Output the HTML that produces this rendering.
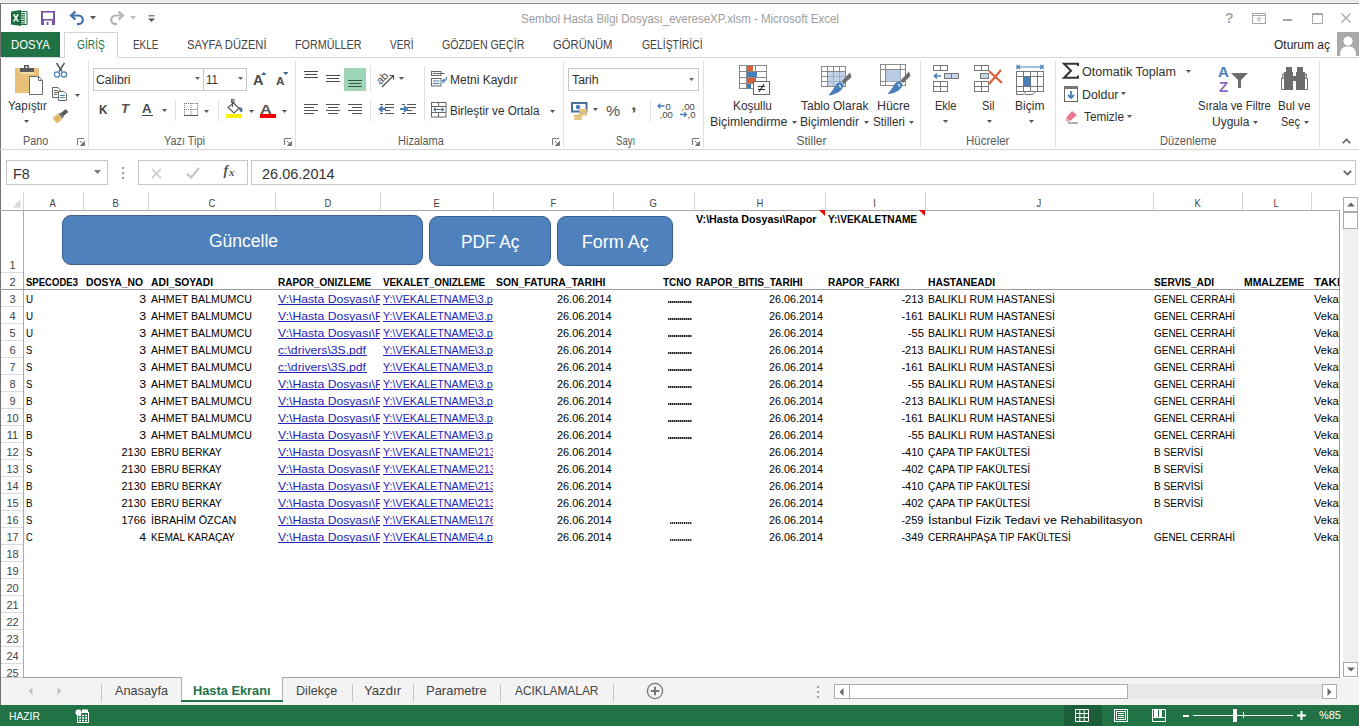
<!DOCTYPE html>
<html><head><meta charset="utf-8">
<style>
*{margin:0;padding:0;box-sizing:border-box}
html,body{width:1359px;height:726px;overflow:hidden;background:#fff;font-family:"Liberation Sans",sans-serif;position:relative}
.a{position:absolute}
.t{position:absolute;white-space:nowrap;line-height:1}
svg.a{overflow:visible}

</style></head><body>
<div class="a" style="left:0px;top:0px;width:1359px;height:2px;background:#ebebee;"></div>
<div class="a" style="left:0px;top:2px;width:1359px;height:1px;background:#f4f4f4;"></div>
<div class="a" style="left:0px;top:3px;width:1359px;height:1px;background:#858585;"></div>
<div class="a" style="left:0px;top:3px;width:1px;height:723px;background:#737373;"></div>
<div class="t" style="top:13px;font-size:12.5px;color:#9d9d9d;left:520.54px;transform:scaleX(0.9195);transform-origin:0 0;">Sembol Hasta Bilgi Dosyası_evereseXP.xlsm - Microsoft Excel</div>
<div class="t" style="top:11px;font-size:14px;color:#a9a9a9;font-weight:bold;left:1225.22px;transform:scaleX(1.0077);transform-origin:50% 0;">?</div>
<svg class="a" style="left:1252px;top:13px;" width="14" height="11" viewBox="0 0 14 11"><rect x="0.5" y="0.5" width="13" height="10" fill="none" stroke="#a6a6a6"/><path d="M1 2.5h12" stroke="#a6a6a6"/><path d="M7 9V4.5M4.8 6.5L7 4.3 9.2 6.5" fill="none" stroke="#a6a6a6"/></svg>
<div class="a" style="left:1283px;top:19px;width:9px;height:2px;background:#a6a6a6;"></div>
<svg class="a" style="left:1312px;top:13px;" width="11" height="11" viewBox="0 0 11 11"><rect x="0.5" y="0.5" width="10" height="10" fill="none" stroke="#a6a6a6"/><rect x="0" y="0" width="11" height="2" fill="#a6a6a6"/></svg>
<svg class="a" style="left:1341px;top:13px;" width="10" height="10" viewBox="0 0 10 10"><path d="M0.5 0.5L9.5 9.5M9.5 0.5L0.5 9.5" stroke="#a6a6a6" stroke-width="1.3"/></svg>
<div class="t" style="top:38.5px;font-size:12.5px;color:#262626;left:1273.52px;transform:scaleX(0.9589);transform-origin:0 0;">Oturum aç</div>
<div class="a" style="left:1337px;top:32px;width:22px;height:24px;background:#a9a9a9;"></div>
<svg class="a" style="left:1337px;top:32px;" width="22" height="24" viewBox="0 0 22 24"><circle cx="11" cy="9" r="4.6" fill="#fff"/><path d="M3 24 C3 16 6 14.5 11 14.5 C16 14.5 19 16 19 24Z" fill="#fff"/></svg>
<svg class="a" style="left:11px;top:10px;" width="17" height="16" viewBox="0 0 17 16"><rect x="9.5" y="1.5" width="6.5" height="13" rx="0.8" fill="#fff" stroke="#1e6b41" stroke-width="1.1"/><path d="M10 3.6h4.2M10 5.9h4.2M10 8.2h4.2M10 10.5h4.2M10 12.8h4.2" stroke="#1e6b41" stroke-width="1.3"/><path d="M0 1.5 L10 0 V16 L0 14.5Z" fill="#1e6b41"/><path d="M2.6 4.3 L7.2 11.6 M7.2 4.3 L2.6 11.6" stroke="#e8f5ec" stroke-width="1.7"/></svg>
<svg class="a" style="left:41px;top:11px;" width="14" height="14" viewBox="0 0 14 14"><path d="M0 0H14V14H0Z" fill="#7a58a8"/><rect x="2" y="1.6" width="10" height="6.4" fill="#fff"/><rect x="3" y="9.6" width="8" height="4.4" fill="#fff"/><rect x="5.6" y="10.8" width="1.8" height="3.2" fill="#7a58a8"/></svg>
<svg class="a" style="left:69px;top:10px;" width="16" height="15" viewBox="0 0 16 15"><path d="M6.5 1.5L2 5.5L6.5 9.5" fill="none" stroke="#3f6fae" stroke-width="2.2"/><path d="M2.5 5.5H9.5A4.3 4.3 0 0 1 9.5 14.1H8" fill="none" stroke="#3f6fae" stroke-width="2.2"/></svg>
<svg class="a" style="left:90px;top:16px;" width="6" height="4" viewBox="0 0 6 4"><path d="M0 0H6L3 3.5Z" fill="#555"/></svg>
<svg class="a" style="left:109px;top:10px;" width="16" height="15" viewBox="0 0 16 15"><path d="M9.5 1.5L14 5.5L9.5 9.5" fill="none" stroke="#b3b3b3" stroke-width="2.2"/><path d="M13.5 5.5H6.5A4.3 4.3 0 0 0 6.5 14.1H8" fill="none" stroke="#b3b3b3" stroke-width="2.2"/></svg>
<svg class="a" style="left:130px;top:16px;" width="6" height="4" viewBox="0 0 6 4"><path d="M0 0H6L3 3.5Z" fill="#bbb"/></svg>
<svg class="a" style="left:148px;top:15px;" width="7" height="8" viewBox="0 0 7 8"><rect x="0.5" y="0.3" width="6" height="1.1" fill="#555"/><path d="M0 3.5H7L3.5 7Z" fill="#555"/></svg>
<div class="a" style="left:1px;top:32px;width:59px;height:25px;background:#217346;"></div>
<div class="t" style="top:39px;font-size:12.5px;color:#fff;left:10.55px;transform:scaleX(0.9081);transform-origin:0 0;">DOSYA</div>
<div class="a" style="left:64px;top:32px;width:54px;height:26px;background:#fff;border:1px solid #d5d5d5;border-bottom:none;"></div>
<div class="a" style="left:0px;top:57px;width:64px;height:1px;background:#d5d5d5;"></div>
<div class="a" style="left:118px;top:57px;width:1241px;height:1px;background:#d5d5d5;"></div>
<div class="t" style="top:39px;font-size:12.5px;color:#217346;left:76.59px;transform:scaleX(0.8170);transform-origin:0 0;">GİRİŞ</div>
<div class="t" style="top:39px;font-size:12.5px;color:#444;left:132.60px;transform:scaleX(0.7943);transform-origin:0 0;">EKLE</div>
<div class="t" style="top:39px;font-size:12.5px;color:#444;left:186.55px;transform:scaleX(0.8975);transform-origin:0 0;">SAYFA DÜZENİ</div>
<div class="t" style="top:39px;font-size:12.5px;color:#444;left:294.57px;transform:scaleX(0.8621);transform-origin:0 0;">FORMÜLLER</div>
<div class="t" style="top:39px;font-size:12.5px;color:#444;left:389.90px;transform:scaleX(0.8053);transform-origin:0 0;">VERİ</div>
<div class="t" style="top:39px;font-size:12.5px;color:#444;left:441.57px;transform:scaleX(0.8530);transform-origin:0 0;">GÖZDEN GEÇİR</div>
<div class="t" style="top:39px;font-size:12.5px;color:#444;left:552.95px;transform:scaleX(0.9020);transform-origin:0 0;">GÖRÜNÜM</div>
<div class="t" style="top:39px;font-size:12.5px;color:#444;left:641.58px;transform:scaleX(0.8313);transform-origin:0 0;">GELİŞTİRİCİ</div>
<div class="a" style="left:0px;top:149px;width:1359px;height:1px;background:#d5d5d5;"></div>
<div class="a" style="left:88px;top:61px;width:1px;height:86px;background:#e1e1e1;"></div>
<div class="a" style="left:295px;top:61px;width:1px;height:86px;background:#e1e1e1;"></div>
<div class="a" style="left:563px;top:61px;width:1px;height:86px;background:#e1e1e1;"></div>
<div class="a" style="left:703px;top:61px;width:1px;height:86px;background:#e1e1e1;"></div>
<div class="a" style="left:920px;top:61px;width:1px;height:86px;background:#e1e1e1;"></div>
<div class="a" style="left:1055px;top:61px;width:1px;height:86px;background:#e1e1e1;"></div>
<div class="a" style="left:1319px;top:61px;width:1px;height:86px;background:#e1e1e1;"></div>
<div class="t" style="top:135px;font-size:12px;color:#5a5a5a;left:23.17px;transform:scaleX(0.9013);transform-origin:0 0;">Pano</div>
<div class="t" style="top:135px;font-size:12px;color:#5a5a5a;left:163.57px;transform:scaleX(0.9054);transform-origin:0 0;">Yazı Tipi</div>
<div class="t" style="top:135px;font-size:12px;color:#5a5a5a;left:397.56px;transform:scaleX(0.9173);transform-origin:0 0;">Hizalama</div>
<div class="t" style="top:135px;font-size:12px;color:#5a5a5a;left:615.61px;transform:scaleX(0.8024);transform-origin:0 0;">Sayı</div>
<div class="t" style="top:135px;font-size:12px;color:#5a5a5a;left:796.52px;">Stiller</div>
<div class="t" style="top:135px;font-size:12px;color:#5a5a5a;left:966.04px;transform:scaleX(0.9572);transform-origin:0 0;">Hücreler</div>
<div class="t" style="top:135px;font-size:12px;color:#5a5a5a;left:1159.55px;transform:scaleX(0.9290);transform-origin:0 0;">Düzenleme</div>
<svg class="a" style="left:77px;top:138px;" width="8" height="8" viewBox="0 0 8 8"><path d="M0.5 7V0.5H7" fill="none" stroke="#777"/><path d="M3 3L7 7M7.5 3.5V7.5H3.5Z" stroke="#777" fill="#777"/></svg>
<svg class="a" style="left:284px;top:138px;" width="8" height="8" viewBox="0 0 8 8"><path d="M0.5 7V0.5H7" fill="none" stroke="#777"/><path d="M3 3L7 7M7.5 3.5V7.5H3.5Z" stroke="#777" fill="#777"/></svg>
<svg class="a" style="left:552px;top:138px;" width="8" height="8" viewBox="0 0 8 8"><path d="M0.5 7V0.5H7" fill="none" stroke="#777"/><path d="M3 3L7 7M7.5 3.5V7.5H3.5Z" stroke="#777" fill="#777"/></svg>
<svg class="a" style="left:692px;top:138px;" width="8" height="8" viewBox="0 0 8 8"><path d="M0.5 7V0.5H7" fill="none" stroke="#777"/><path d="M3 3L7 7M7.5 3.5V7.5H3.5Z" stroke="#777" fill="#777"/></svg>
<svg class="a" style="left:1342px;top:138px;" width="9" height="6" viewBox="0 0 9 6"><path d="M0.8 5.2L4.5 1.3L8.2 5.2" fill="none" stroke="#555" stroke-width="1.6"/></svg>
<div class="t" style="top:100px;font-size:12px;color:#303030;left:7.54px;transform:scaleX(0.9618);transform-origin:0 0;">Yapıştır</div>
<svg class="a" style="left:24px;top:120px;" width="5" height="3" viewBox="0 0 5 3"><path d="M0 0H5L2.5 3Z" fill="#555"/></svg>
<svg class="a" style="left:14px;top:64px;" width="31" height="32" viewBox="0 0 31 32"><rect x="1" y="4" width="24" height="25" fill="#e8c07a"/><rect x="6" y="8" width="14" height="2" fill="#f3dcae"/>
<rect x="6" y="4" width="14" height="4" fill="#595959"/><rect x="10" y="1" width="5" height="4" fill="#595959"/><rect x="11.5" y="2.3" width="2" height="1.6" fill="#fff"/>
<path d="M15.5 12.5H24.5L28.5 16.5V30.5H15.5Z" fill="#fff" stroke="#6d6d6d"/><path d="M24.5 12.5V16.5H28.5" fill="none" stroke="#6d6d6d"/></svg>
<svg class="a" style="left:53px;top:63px;" width="15" height="15" viewBox="0 0 15 15"><path d="M3.5 0L9 8.5M11.5 0L6 8.5" stroke="#555" stroke-width="1.4"/><circle cx="4" cy="11.5" r="2.6" fill="none" stroke="#4a7ebb" stroke-width="1.3"/><circle cx="11" cy="11.5" r="2.6" fill="none" stroke="#4a7ebb" stroke-width="1.3"/></svg>
<svg class="a" style="left:52px;top:87px;" width="15" height="14" viewBox="0 0 15 14"><path d="M0.5 0.5H6L8 2.5V10.5H0.5Z" fill="#fff" stroke="#666"/><path d="M2 3.5h4M2 5.5h4M2 7.5h3" stroke="#666"/><path d="M6.5 4.5H12L14.5 7V13.5H6.5Z" fill="#fff" stroke="#666"/><path d="M8 8.5h5M8 10.5h5" stroke="#4a7ebb"/></svg>
<svg class="a" style="left:75px;top:94px;" width="5" height="3" viewBox="0 0 5 3"><path d="M0 0H5L2.5 3Z" fill="#555"/></svg>
<svg class="a" style="left:52px;top:108px;" width="17" height="16" viewBox="0 0 17 16"><g transform="rotate(-40 8.5 8)"><rect x="10" y="6" width="7" height="4" fill="#595959"/><rect x="8" y="5" width="2.5" height="6" fill="#777"/><path d="M1 4.5H8V11.5H1Z" fill="#e6bd6e"/><path d="M3.5 4.5V11.5M5.5 4.5V11.5" stroke="#d6a850" stroke-width="0.6"/></g></svg>
<div class="a" style="left:93px;top:68px;width:154px;height:23px;background:#fff;border:1px solid #c6c6c6;"></div>
<div class="a" style="left:203px;top:69px;width:1px;height:21px;background:#c6c6c6;"></div>
<div class="t" style="top:74px;font-size:12px;color:#303030;left:96.01px;transform:scaleX(1.0134);transform-origin:0 0;">Calibri</div>
<div class="t" style="top:74px;font-size:12px;color:#303030;left:206.04px;transform:scaleX(0.9558);transform-origin:0 0;">11</div>
<svg class="a" style="left:195px;top:77px;" width="5" height="3" viewBox="0 0 5 3"><path d="M0 0H5L2.5 3Z" fill="#666"/></svg>
<svg class="a" style="left:238px;top:77px;" width="5" height="3" viewBox="0 0 5 3"><path d="M0 0H5L2.5 3Z" fill="#666"/></svg>
<div class="t" style="top:73px;font-size:14px;color:#4a4a4a;font-weight:bold;left:252.62px;transform:scaleX(1.0328);transform-origin:0 0;">A</div>
<svg class="a" style="left:260.8px;top:72px;" width="6" height="3" viewBox="0 0 6 3"><path d="M0 3H5.5L2.75 0Z" fill="#44618a"/></svg>
<div class="t" style="top:76px;font-size:11px;color:#4a4a4a;font-weight:bold;left:275.53px;transform:scaleX(1.0604);transform-origin:0 0;">A</div>
<svg class="a" style="left:283px;top:72px;" width="6" height="3" viewBox="0 0 6 3"><path d="M0 0H5.5L2.75 3Z" fill="#44618a"/></svg>
<div class="t" style="top:104px;font-size:12px;color:#444;font-weight:bold;left:99.23px;transform:scaleX(0.9725);transform-origin:0 0;">K</div>
<div class="t" style="top:103px;font-size:12.5px;color:#555;font-weight:bold;font-style:italic;left:121.47px;transform:scaleX(1.0541);transform-origin:0 0;">T</div>
<div class="t" style="top:103px;font-size:12.5px;color:#4a4a4a;font-weight:bold;left:142.47px;transform:scaleX(1.0584);transform-origin:0 0;">A</div>
<div class="a" style="left:142px;top:115px;width:11px;height:1px;background:#444;"></div>
<svg class="a" style="left:162px;top:109px;" width="5" height="3" viewBox="0 0 5 3"><path d="M0 0H5L2.5 3Z" fill="#555"/></svg>
<div class="a" style="left:175px;top:100px;width:1px;height:21px;background:#e1e1e1;"></div>
<svg class="a" style="left:184px;top:103px;" width="14" height="13" viewBox="0 0 14 13"><path d="M0.5 0V12M13.5 0V12M7 0V12M0 0.5H14M0 6.5H14" fill="none" stroke="#666" stroke-dasharray="1 1.1"/><path d="M0 12.5H14" stroke="#555"/></svg>
<svg class="a" style="left:204px;top:110px;" width="5" height="3" viewBox="0 0 5 3"><path d="M0 0H5L2.5 3Z" fill="#555"/></svg>
<div class="a" style="left:218px;top:100px;width:1px;height:21px;background:#e1e1e1;"></div>
<svg class="a" style="left:226px;top:99px;" width="18" height="15" viewBox="0 0 18 15"><path d="M7.5 4L13 9.5L8 14L2 8.5Z" fill="#fff" stroke="#555" stroke-width="1.1"/><path d="M6.5 1.5V8" stroke="#555" stroke-width="1.1"/><rect x="5.5" y="0.5" width="2.5" height="3" fill="none" stroke="#555" stroke-width="0.9"/><path d="M12 8.5Q16.5 7.5 16.5 11Q16.5 13 15 13.5Q13.5 11 12 8.5Z" fill="#4a6f9c"/></svg>
<div class="a" style="left:226px;top:114px;width:16px;height:4px;background:#f7f10a;"></div>
<svg class="a" style="left:249px;top:110px;" width="5" height="3" viewBox="0 0 5 3"><path d="M0 0H5L2.5 3Z" fill="#555"/></svg>
<div class="t" style="top:103px;font-size:13px;color:#555;font-weight:bold;left:260.35px;transform:scaleX(1.2574);transform-origin:0 0;">A</div>
<div class="a" style="left:260px;top:114px;width:16px;height:4px;background:#f00000;"></div>
<svg class="a" style="left:282px;top:110px;" width="5" height="3" viewBox="0 0 5 3"><path d="M0 0H5L2.5 3Z" fill="#555"/></svg>
<svg class="a" style="left:304px;top:71px;" width="15" height="8" viewBox="0 0 15 8"><path d="M0 0.5H14M1 3.5H13M0 6.5H14" stroke="#4a4a4a"/></svg>
<svg class="a" style="left:326px;top:75px;" width="15" height="8" viewBox="0 0 15 8"><path d="M0 0.5H14M1 3.5H13M0 6.5H14" stroke="#4a4a4a"/></svg>
<div class="a" style="left:344px;top:68px;width:22px;height:23px;background:#9fd5b7;"></div>
<svg class="a" style="left:348px;top:80px;" width="15" height="8" viewBox="0 0 15 8"><path d="M0 0.5H14M1 3.5H13M0 6.5H14" stroke="#2f5a3f"/></svg>
<div class="a" style="left:370px;top:66px;width:1px;height:25px;background:#e1e1e1;"></div>
<svg class="a" style="left:377px;top:70px;" width="19" height="18" viewBox="0 0 19 18"><text x="0" y="0" font-size="11" font-family="Liberation Sans" fill="#4a4a4a" transform="translate(3.5 15) rotate(-45)">ab</text><path d="M5 17L16 6M12.5 5.5H16.5V9.5" fill="none" stroke="#4a4a4a" stroke-width="1.2"/></svg>
<svg class="a" style="left:399px;top:77px;" width="5" height="3" viewBox="0 0 5 3"><path d="M0 0H5L2.5 3Z" fill="#555"/></svg>
<div class="a" style="left:424px;top:66px;width:1px;height:55px;background:#e1e1e1;"></div>
<svg class="a" style="left:431px;top:71px;" width="17" height="16" viewBox="0 0 17 16"><rect x="0.5" y="0.5" width="9.5" height="4" fill="none" stroke="#666"/><path d="M2 2.5H13.5" stroke="#666"/><rect x="0.5" y="7.5" width="9.5" height="7.5" fill="#fff" stroke="#666"/><path d="M2 10H8.5M2 12.5H8.5" stroke="#4a7ebb"/><path d="M15.5 6Q16 10 11.5 10M13.5 8L11.3 10L13.5 12" fill="none" stroke="#4a7ebb" stroke-width="1.1"/></svg>
<div class="t" style="top:74px;font-size:12px;color:#303030;left:450.02px;">Metni Kaydır</div>
<svg class="a" style="left:304px;top:104px;" width="15" height="12" viewBox="0 0 15 12"><path d="M0 0.5H14M0 3.5H10M0 6.5H14M0 9.5H10" stroke="#555"/></svg>
<svg class="a" style="left:326px;top:104px;" width="15" height="12" viewBox="0 0 15 12"><path d="M0 0.5H14M2 3.5H12M0 6.5H14M2 9.5H12" stroke="#555"/></svg>
<svg class="a" style="left:348px;top:104px;" width="15" height="12" viewBox="0 0 15 12"><path d="M0 0.5H14M4 3.5H14M0 6.5H14M4 9.5H14" stroke="#555"/></svg>
<div class="a" style="left:370px;top:100px;width:1px;height:21px;background:#e1e1e1;"></div>
<svg class="a" style="left:378px;top:104px;" width="17" height="12" viewBox="0 0 17 12"><path d="M2 0.5H5M7 0.5H16M7 3.5H16M7 6.5H12M2 9.5H5M7 9.5H16" stroke="#555"/><path d="M8 5H2M4.5 2.3L1.5 5L4.5 7.7" fill="none" stroke="#4a7ebb" stroke-width="2"/></svg>
<svg class="a" style="left:400px;top:104px;" width="17" height="12" viewBox="0 0 17 12"><path d="M2 0.5H5M7 0.5H16M7 3.5H16M7 6.5H12M2 9.5H5M7 9.5H16" stroke="#555"/><path d="M0 5H6.5M4 2.3L7 5L4 7.7" fill="none" stroke="#4a7ebb" stroke-width="2"/></svg>
<svg class="a" style="left:431px;top:102px;" width="16" height="16" viewBox="0 0 16 16"><rect x="0.5" y="0.5" width="14.5" height="14.5" fill="none" stroke="#666"/><path d="M0.5 4.5H15M0.5 10.5H15M7.5 0.5V4.5M7.5 10.5V15" stroke="#666"/><path d="M3 7.5H12.5M4.8 5.7L3 7.5L4.8 9.3M10.7 5.7L12.5 7.5L10.7 9.3" fill="none" stroke="#4a6f9c" stroke-width="1.1"/></svg>
<div class="t" style="top:105px;font-size:12px;color:#303030;left:450.03px;transform:scaleX(0.9718);transform-origin:0 0;">Birleştir ve Ortala</div>
<svg class="a" style="left:550px;top:110px;" width="5" height="3" viewBox="0 0 5 3"><path d="M0 0H5L2.5 3Z" fill="#555"/></svg>
<div class="a" style="left:568px;top:68px;width:131px;height:23px;background:#fff;border:1px solid #c6c6c6;"></div>
<div class="t" style="top:74px;font-size:12px;color:#303030;left:571.51px;transform:scaleX(1.0217);transform-origin:0 0;">Tarih</div>
<svg class="a" style="left:689px;top:78px;" width="5" height="3" viewBox="0 0 5 3"><path d="M0 0H5L2.5 3Z" fill="#666"/></svg>
<svg class="a" style="left:571px;top:102px;" width="17" height="18" viewBox="0 0 17 18"><rect x="1" y="1" width="14.5" height="8.5" fill="#fff" stroke="#4a6f9c" stroke-width="2"/><circle cx="7" cy="5" r="2.2" fill="#4a7ebb"/><rect x="8" y="7" width="8" height="3" rx="1.2" fill="#e6c27a"/><rect x="8" y="10.5" width="8" height="3" rx="1.2" fill="#e6c27a"/><rect x="3" y="12.5" width="8" height="3" rx="1.2" fill="#e6c27a"/><rect x="3" y="15.5" width="8" height="2.5" rx="1.2" fill="#e6c27a"/></svg>
<svg class="a" style="left:593px;top:108px;" width="5" height="3" viewBox="0 0 5 3"><path d="M0 0H5L2.5 3Z" fill="#555"/></svg>
<div class="t" style="top:103px;font-size:15px;color:#555;left:606.36px;transform:scaleX(1.0705);transform-origin:0 0;">%</div>
<div class="t" style="top:97px;font-size:16px;color:#555;font-weight:bold;left:631.19px;transform:scaleX(1.2606);transform-origin:0 0;">,</div>
<div class="a" style="left:650px;top:100px;width:1px;height:22px;background:#e1e1e1;"></div>
<svg class="a" style="left:657px;top:102px;" width="17" height="16" viewBox="0 0 17 16"><text x="8.5" y="7.5" font-size="9.5" font-family="Liberation Sans" fill="#444">0</text><text x="2.5" y="15.5" font-size="9.5" font-family="Liberation Sans" fill="#444">,00</text><path d="M7.5 4H1M3.3 1.7L1 4L3.3 6.3" fill="none" stroke="#4a7ebb" stroke-width="1.3"/></svg>
<svg class="a" style="left:679px;top:102px;" width="17" height="16" viewBox="0 0 17 16"><text x="2.5" y="7.5" font-size="9.5" font-family="Liberation Sans" fill="#444">,00</text><text x="8.5" y="15.5" font-size="9.5" font-family="Liberation Sans" fill="#444">,0</text><path d="M1 12.5H7.5M5.2 10.2L7.5 12.5L5.2 14.8" fill="none" stroke="#4a7ebb" stroke-width="1.3"/></svg>
<svg class="a" style="left:739px;top:65px;" width="32" height="31" viewBox="0 0 32 31"><g stroke="#8a8a8a" fill="none"><rect x="0.5" y="0.5" width="27" height="23"/><path d="M7.5 0.5V23.5M16.5 0.5V23.5M0.5 6.5H27.5M0.5 12.5H27.5M0.5 18.5H27.5"/></g>
<rect x="8" y="1" width="6" height="5" fill="#d9603b"/><rect x="8" y="7" width="10" height="5" fill="#4a7ebb"/><rect x="8" y="13" width="8" height="5" fill="#d9603b"/><rect x="8" y="19" width="4" height="5" fill="#4a7ebb"/>
<rect x="14.5" y="16.5" width="16" height="13" fill="#fff" stroke="#666"/><path d="M19 21.5H26M19 24.5H26M25 19L20 27" stroke="#333" stroke-width="1.2"/></svg>
<div class="t" style="top:100px;font-size:12px;color:#303030;left:733.02px;transform:scaleX(0.9896);transform-origin:0 0;">Koşullu</div>
<div class="t" style="top:116px;font-size:12px;color:#303030;left:710.01px;transform:scaleX(1.0282);transform-origin:0 0;">Biçimlendirme</div>
<svg class="a" style="left:792px;top:121px;" width="5" height="3" viewBox="0 0 5 3"><path d="M0 0H5L2.5 3Z" fill="#555"/></svg>
<svg class="a" style="left:821px;top:66px;" width="31" height="30" viewBox="0 0 31 30"><g stroke="#8a8a8a" fill="none"><rect x="0.5" y="0.5" width="24" height="20"/><path d="M6.5 0.5V20.5M12.5 0.5V20.5M18.5 0.5V20.5M0.5 5.5H24.5M0.5 10.5H24.5M0.5 15.5H24.5"/></g>
<rect x="7" y="6" width="17" height="14" fill="#b8cce4" opacity="0.85"/><path d="M7 10.5H24M7 15.5H24M12.5 6V20M18.5 6V20" stroke="#9aa9bb" stroke-width="0.8"/>
<path d="M29 6.5L30.5 11L23 18L20.5 15.5Z" fill="#6d6d6d"/><path d="M19.5 16L22.5 19Q22 24 17 26.5Q12 29 7.5 29.5Q12 24 14 20Q16 16.5 19.5 16Z" fill="#4a7ebb"/><path d="M18 19Q19.5 20 19.5 21.5" stroke="#fff" stroke-width="1.3" fill="none"/></svg>
<div class="t" style="top:100px;font-size:12px;color:#303030;left:801.02px;">Tablo Olarak</div>
<div class="t" style="top:116px;font-size:12px;color:#303030;left:799.52px;transform:scaleX(1.0047);transform-origin:0 0;">Biçimlendir</div>
<svg class="a" style="left:864px;top:121px;" width="5" height="3" viewBox="0 0 5 3"><path d="M0 0H5L2.5 3Z" fill="#555"/></svg>
<svg class="a" style="left:880px;top:64px;" width="31" height="30" viewBox="0 0 31 30"><g stroke="#8a8a8a" fill="none"><rect x="0.5" y="0.5" width="25" height="21"/><path d="M5.5 0.5V21.5M20.5 0.5V21.5M0.5 5.5H25.5M0.5 17.5H25.5"/></g>
<rect x="6" y="6" width="14.5" height="11.5" fill="#b8cce4"/>
<path d="M29 7.5L30.5 12L23 19L20.5 16.5Z" fill="#6d6d6d"/><path d="M19.5 17L22.5 20Q22 25 17 27.5Q12 30 7.5 30Q12 25 14 21Q16 17.5 19.5 17Z" fill="#4a7ebb"/><path d="M18 20Q19.5 21 19.5 22.5" stroke="#fff" stroke-width="1.3" fill="none"/></svg>
<div class="t" style="top:100px;font-size:12px;color:#303030;left:876.51px;transform:scaleX(1.0304);transform-origin:0 0;">Hücre</div>
<div class="t" style="top:116px;font-size:12px;color:#303030;left:872.53px;transform:scaleX(0.9776);transform-origin:0 0;">Stilleri</div>
<svg class="a" style="left:909px;top:121px;" width="5" height="3" viewBox="0 0 5 3"><path d="M0 0H5L2.5 3Z" fill="#555"/></svg>
<svg class="a" style="left:933px;top:65px;" width="27" height="28" viewBox="0 0 27 28"><g stroke="#777" fill="none"><rect x="0.5" y="0.5" width="14" height="5"/><path d="M7.5 0.5V5.5"/><rect x="0.5" y="16.5" width="14" height="10"/><path d="M7.5 16.5V26.5M0.5 21.5H14.5"/></g>
<rect x="11.5" y="8.5" width="14" height="5" fill="#c5d5e8" stroke="#777"/><path d="M18.5 8.5V13.5" stroke="#777"/><path d="M8 11H1.5M4 8.5L1.5 11L4 13.5" fill="none" stroke="#4a7ebb" stroke-width="1.6"/></svg>
<div class="t" style="top:100px;font-size:12px;color:#303030;left:935.06px;transform:scaleX(0.9158);transform-origin:0 0;">Ekle</div>
<svg class="a" style="left:943px;top:120px;" width="5" height="3" viewBox="0 0 5 3"><path d="M0 0H5L2.5 3Z" fill="#555"/></svg>
<svg class="a" style="left:974px;top:65px;" width="30" height="28" viewBox="0 0 30 28"><g stroke="#777" fill="none"><rect x="0.5" y="0.5" width="14" height="5"/><path d="M7.5 0.5V5.5"/><rect x="0.5" y="16.5" width="14" height="10"/><path d="M7.5 16.5V26.5M0.5 21.5H14.5"/></g>
<rect x="6.5" y="8.5" width="8" height="5" fill="#c5d5e8" stroke="#777"/><path d="M15 6L28 18M27 5L15 19" stroke="#d9603b" stroke-width="2.2"/></svg>
<div class="t" style="top:100px;font-size:12px;color:#303030;left:981.55px;transform:scaleX(0.9286);transform-origin:0 0;">Sil</div>
<svg class="a" style="left:987px;top:120px;" width="5" height="3" viewBox="0 0 5 3"><path d="M0 0H5L2.5 3Z" fill="#555"/></svg>
<svg class="a" style="left:1016px;top:63px;" width="29" height="32" viewBox="0 0 29 32"><path d="M1 4H27M1 1.5V6.5M27 1.5V6.5M4 2L1.5 4L4 6M24 2L26.5 4L24 6" fill="none" stroke="#4a7ebb" stroke-width="1.1"/>
<g stroke="#777" fill="none"><rect x="0.5" y="8.5" width="27" height="20"/><path d="M7.5 8.5V28.5M14.5 8.5V28.5M21.5 8.5V28.5M0.5 13.5H27.5M0.5 23.5H27.5"/><path d="M0.5 28.5V31.5H7.5L10 28.5M9 31.5H17L19 28.5"/></g>
<rect x="8" y="14" width="6.5" height="9" fill="#4a7ebb"/></svg>
<div class="t" style="top:100px;font-size:12px;color:#303030;left:1015.02px;transform:scaleX(1.0041);transform-origin:0 0;">Biçim</div>
<svg class="a" style="left:1029px;top:120px;" width="5" height="3" viewBox="0 0 5 3"><path d="M0 0H5L2.5 3Z" fill="#555"/></svg>
<svg class="a" style="left:1063px;top:63px;" width="16" height="16" viewBox="0 0 16 16"><path d="M15 3V0.8H1L8 7.8L1 14.8H15V12.5" fill="none" stroke="#333" stroke-width="2"/></svg>
<div class="t" style="top:66px;font-size:12px;color:#303030;left:1082.00px;transform:scaleX(1.0467);transform-origin:0 0;">Otomatik Toplam</div>
<svg class="a" style="left:1186px;top:70px;" width="5" height="3" viewBox="0 0 5 3"><path d="M0 0H5L2.5 3Z" fill="#555"/></svg>
<svg class="a" style="left:1064px;top:86px;" width="15" height="17" viewBox="0 0 15 17"><rect x="0.5" y="0.5" width="13" height="15" fill="#fff" stroke="#666"/><rect x="0" y="0" width="14" height="3" fill="#777"/><path d="M7 5V12M4 9L7 12L10 9" fill="none" stroke="#4a7ebb" stroke-width="1.8"/></svg>
<div class="t" style="top:89px;font-size:12px;color:#303030;left:1082.00px;transform:scaleX(1.0320);transform-origin:0 0;">Doldur</div>
<svg class="a" style="left:1121px;top:92px;" width="5" height="3" viewBox="0 0 5 3"><path d="M0 0H5L2.5 3Z" fill="#555"/></svg>
<svg class="a" style="left:1064px;top:110px;" width="15" height="14" viewBox="0 0 15 14"><path d="M8 1L13 5L6 11L2 8Z" fill="#e8768e"/><path d="M2 8L6 11L4 12.5L1 10Z" fill="#f2b2c0"/><path d="M4 13H14" stroke="#666"/></svg>
<div class="t" style="top:111px;font-size:12px;color:#303030;left:1083.53px;transform:scaleX(0.9817);transform-origin:0 0;">Temizle</div>
<svg class="a" style="left:1127px;top:115px;" width="5" height="3" viewBox="0 0 5 3"><path d="M0 0H5L2.5 3Z" fill="#555"/></svg>
<svg class="a" style="left:1218px;top:64px;" width="32" height="30" viewBox="0 0 32 30"><text x="0" y="13" font-size="15" font-weight="bold" font-family="Liberation Sans" fill="#4a7ebb">A</text><text x="1" y="28" font-size="15" font-weight="bold" font-family="Liberation Sans" fill="#8a6bc1">Z</text>
<path d="M13 9H30L23 16V24H20V16Z" fill="#6d6d6d"/></svg>
<div class="t" style="top:100px;font-size:12px;color:#303030;left:1197.55px;transform:scaleX(0.9424);transform-origin:0 0;">Sırala ve Filtre</div>
<div class="t" style="top:116px;font-size:12px;color:#303030;left:1212.02px;">Uygula</div>
<svg class="a" style="left:1253px;top:121px;" width="5" height="3" viewBox="0 0 5 3"><path d="M0 0H5L2.5 3Z" fill="#555"/></svg>
<svg class="a" style="left:1281px;top:66px;" width="27" height="25" viewBox="0 0 27 25"><rect x="5" y="1" width="6" height="6" fill="#6d6d6d"/><rect x="16" y="1" width="6" height="6" fill="#6d6d6d"/>
<path d="M0.5 12.5H4V23.5H0.5Z" fill="#fff" stroke="#6d6d6d"/><path d="M23 12.5H26.5V23.5H23Z" fill="#fff" stroke="#6d6d6d"/>
<path d="M3 6H12V24H3Z" fill="#6d6d6d"/><path d="M15 6H24V24H15Z" fill="#6d6d6d"/><rect x="11" y="10" width="5" height="5" fill="#6d6d6d"/><path d="M1.5 8H3V12.5H1.5ZM24 8H25.5V12.5H24Z" fill="#fff" stroke="#6d6d6d" stroke-width="0.8"/></svg>
<div class="t" style="top:100px;font-size:12px;color:#303030;left:1278.03px;transform:scaleX(0.9722);transform-origin:0 0;">Bul ve</div>
<div class="t" style="top:116px;font-size:12px;color:#303030;left:1280.56px;transform:scaleX(0.9124);transform-origin:0 0;">Seç</div>
<svg class="a" style="left:1304px;top:121px;" width="5" height="3" viewBox="0 0 5 3"><path d="M0 0H5L2.5 3Z" fill="#555"/></svg>
<div class="a" style="left:6px;top:160px;width:102px;height:25px;border:1px solid #c6c6c6;"></div>
<div class="t" style="top:166px;font-size:15px;color:#333;left:12.93px;transform:scaleX(0.9500);transform-origin:0 0;">F8</div>
<svg class="a" style="left:94px;top:170px;" width="7" height="4" viewBox="0 0 7 4"><path d="M0 0H7L3.5 4Z" fill="#777"/></svg>
<div class="a" style="left:122px;top:167px;width:2px;height:2px;background:#9a9a9a;"></div>
<div class="a" style="left:122px;top:172px;width:2px;height:2px;background:#9a9a9a;"></div>
<div class="a" style="left:122px;top:177px;width:2px;height:2px;background:#9a9a9a;"></div>
<div class="a" style="left:138px;top:160px;width:110px;height:25px;border:1px solid #c6c6c6;"></div>
<svg class="a" style="left:151px;top:168px;" width="11" height="11" viewBox="0 0 11 11"><path d="M1 1L10 10M10 1L1 10" stroke="#c3c3c3" stroke-width="1.3"/></svg>
<svg class="a" style="left:186px;top:167px;" width="14" height="12" viewBox="0 0 14 12"><path d="M1 6.5 L5 10.5 L13 1" fill="none" stroke="#c6c6c6" stroke-width="2.2"/></svg>
<div class="t" style="top:164px;font-size:14px;color:#555;font-family:'Liberation Serif';font-weight:bold;font-style:italic;left:223.44px;">f</div>
<div class="t" style="top:167px;font-size:11px;color:#555;font-family:'Liberation Serif';font-weight:bold;font-style:italic;left:229.06px;">x</div>
<div class="a" style="left:251px;top:160px;width:1105px;height:25px;border:1px solid #c6c6c6;"></div>
<div class="t" style="top:166px;font-size:15px;color:#333;left:262.42px;transform:scaleX(0.9678);transform-origin:0 0;">26.06.2014</div>
<svg class="a" style="left:1343px;top:170px;" width="9" height="6" viewBox="0 0 9 6"><path d="M0.8 0.8L4.5 4.5L8.2 0.8" fill="none" stroke="#666" stroke-width="1.8"/></svg>
<div class="t" style="top:198px;font-size:11px;color:#444;left:49.33px;transform:scaleX(0.8600);transform-origin:50% 0;">A</div>
<div class="a" style="left:83px;top:192px;width:1px;height:18px;background:#d4d4d4;"></div>
<div class="t" style="top:198px;font-size:11px;color:#444;left:111.83px;transform:scaleX(0.8600);transform-origin:50% 0;">B</div>
<div class="a" style="left:148px;top:192px;width:1px;height:18px;background:#d4d4d4;"></div>
<div class="t" style="top:198px;font-size:11px;color:#444;left:207.52px;transform:scaleX(0.8600);transform-origin:50% 0;">C</div>
<div class="a" style="left:275px;top:192px;width:1px;height:18px;background:#d4d4d4;"></div>
<div class="t" style="top:198px;font-size:11px;color:#444;left:323.52px;transform:scaleX(0.8600);transform-origin:50% 0;">D</div>
<div class="a" style="left:380px;top:192px;width:1px;height:18px;background:#d4d4d4;"></div>
<div class="t" style="top:198px;font-size:11px;color:#444;left:432.83px;transform:scaleX(0.8600);transform-origin:50% 0;">E</div>
<div class="a" style="left:493px;top:192px;width:1px;height:18px;background:#d4d4d4;"></div>
<div class="t" style="top:198px;font-size:11px;color:#444;left:549.63px;transform:scaleX(0.8600);transform-origin:50% 0;">F</div>
<div class="a" style="left:613px;top:192px;width:1px;height:18px;background:#d4d4d4;"></div>
<div class="t" style="top:198px;font-size:11px;color:#444;left:649.22px;transform:scaleX(0.8600);transform-origin:50% 0;">G</div>
<div class="a" style="left:694px;top:192px;width:1px;height:18px;background:#d4d4d4;"></div>
<div class="t" style="top:198px;font-size:11px;color:#444;left:755.52px;transform:scaleX(0.8600);transform-origin:50% 0;">H</div>
<div class="a" style="left:825px;top:192px;width:1px;height:18px;background:#d4d4d4;"></div>
<div class="t" style="top:198px;font-size:11px;color:#444;left:873.47px;transform:scaleX(0.8600);transform-origin:50% 0;">I</div>
<div class="a" style="left:925px;top:192px;width:1px;height:18px;background:#d4d4d4;"></div>
<div class="t" style="top:198px;font-size:11px;color:#444;left:1036.25px;transform:scaleX(0.8600);transform-origin:50% 0;">J</div>
<div class="a" style="left:1153px;top:192px;width:1px;height:18px;background:#d4d4d4;"></div>
<div class="t" style="top:198px;font-size:11px;color:#444;left:1193.83px;transform:scaleX(0.8600);transform-origin:50% 0;">K</div>
<div class="a" style="left:1242px;top:192px;width:1px;height:18px;background:#d4d4d4;"></div>
<div class="t" style="top:198px;font-size:11px;color:#444;left:1273.44px;transform:scaleX(0.8600);transform-origin:50% 0;">L</div>
<div class="a" style="left:1311px;top:192px;width:1px;height:18px;background:#d4d4d4;"></div>
<div class="a" style="left:23px;top:192px;width:1px;height:18px;background:#d4d4d4;"></div>
<svg class="a" style="left:12px;top:199px;" width="9" height="9" viewBox="0 0 9 9"><path d="M8.5 0.5V8.5H0.5Z" fill="#d8d8d8"/></svg>
<div class="a" style="left:0px;top:210px;width:1339px;height:1px;background:#ababab;"></div>
<div class="a" style="left:23px;top:210px;width:1px;height:468px;background:#ababab;"></div>
<div class="a" style="left:1px;top:272px;width:22px;height:1px;background:#dadada;"></div>
<div class="t" style="top:260px;font-size:11px;color:#444;left:9.44px;">1</div>
<div class="a" style="left:1px;top:289px;width:22px;height:1px;background:#dadada;"></div>
<div class="t" style="top:277px;font-size:11px;color:#444;left:9.44px;">2</div>
<div class="a" style="left:1px;top:306px;width:22px;height:1px;background:#dadada;"></div>
<div class="t" style="top:294px;font-size:11px;color:#444;left:9.44px;">3</div>
<div class="a" style="left:1px;top:323px;width:22px;height:1px;background:#dadada;"></div>
<div class="t" style="top:311px;font-size:11px;color:#444;left:9.44px;">4</div>
<div class="a" style="left:1px;top:340px;width:22px;height:1px;background:#dadada;"></div>
<div class="t" style="top:328px;font-size:11px;color:#444;left:9.44px;">5</div>
<div class="a" style="left:1px;top:357px;width:22px;height:1px;background:#dadada;"></div>
<div class="t" style="top:345px;font-size:11px;color:#444;left:9.44px;">6</div>
<div class="a" style="left:1px;top:374px;width:22px;height:1px;background:#dadada;"></div>
<div class="t" style="top:362px;font-size:11px;color:#444;left:9.44px;">7</div>
<div class="a" style="left:1px;top:391px;width:22px;height:1px;background:#dadada;"></div>
<div class="t" style="top:379px;font-size:11px;color:#444;left:9.44px;">8</div>
<div class="a" style="left:1px;top:408px;width:22px;height:1px;background:#dadada;"></div>
<div class="t" style="top:396px;font-size:11px;color:#444;left:9.44px;">9</div>
<div class="a" style="left:1px;top:425px;width:22px;height:1px;background:#dadada;"></div>
<div class="t" style="top:413px;font-size:11px;color:#444;left:6.38px;">10</div>
<div class="a" style="left:1px;top:442px;width:22px;height:1px;background:#dadada;"></div>
<div class="t" style="top:430px;font-size:11px;color:#444;left:6.79px;">11</div>
<div class="a" style="left:1px;top:459px;width:22px;height:1px;background:#dadada;"></div>
<div class="t" style="top:447px;font-size:11px;color:#444;left:6.38px;">12</div>
<div class="a" style="left:1px;top:476px;width:22px;height:1px;background:#dadada;"></div>
<div class="t" style="top:464px;font-size:11px;color:#444;left:6.38px;">13</div>
<div class="a" style="left:1px;top:493px;width:22px;height:1px;background:#dadada;"></div>
<div class="t" style="top:481px;font-size:11px;color:#444;left:6.38px;">14</div>
<div class="a" style="left:1px;top:510px;width:22px;height:1px;background:#dadada;"></div>
<div class="t" style="top:498px;font-size:11px;color:#444;left:6.38px;">15</div>
<div class="a" style="left:1px;top:527px;width:22px;height:1px;background:#dadada;"></div>
<div class="t" style="top:515px;font-size:11px;color:#444;left:6.38px;">16</div>
<div class="a" style="left:1px;top:544px;width:22px;height:1px;background:#dadada;"></div>
<div class="t" style="top:532px;font-size:11px;color:#444;left:6.38px;">17</div>
<div class="a" style="left:1px;top:561px;width:22px;height:1px;background:#dadada;"></div>
<div class="t" style="top:549px;font-size:11px;color:#444;left:6.38px;">18</div>
<div class="a" style="left:1px;top:578px;width:22px;height:1px;background:#dadada;"></div>
<div class="t" style="top:566px;font-size:11px;color:#444;left:6.38px;">19</div>
<div class="a" style="left:1px;top:595px;width:22px;height:1px;background:#dadada;"></div>
<div class="t" style="top:583px;font-size:11px;color:#444;left:6.38px;">20</div>
<div class="a" style="left:1px;top:612px;width:22px;height:1px;background:#dadada;"></div>
<div class="t" style="top:600px;font-size:11px;color:#444;left:6.38px;">21</div>
<div class="a" style="left:1px;top:629px;width:22px;height:1px;background:#dadada;"></div>
<div class="t" style="top:617px;font-size:11px;color:#444;left:6.38px;">22</div>
<div class="a" style="left:1px;top:646px;width:22px;height:1px;background:#dadada;"></div>
<div class="t" style="top:634px;font-size:11px;color:#444;left:6.38px;">23</div>
<div class="a" style="left:1px;top:663px;width:22px;height:1px;background:#dadada;"></div>
<div class="t" style="top:651px;font-size:11px;color:#444;left:6.38px;">24</div>
<div class="t" style="top:668px;font-size:11px;color:#444;left:6.38px;">25</div>
<div class="a" style="left:0px;top:289px;width:1339px;height:1px;background:#9b9b9b;"></div>
<div class="a" style="left:1339px;top:210px;width:1px;height:467px;background:#9b9b9b;"></div>
<div class="a" style="left:23px;top:677px;width:1317px;height:1px;background:#9b9b9b;"></div>
<div class="a" style="left:62px;top:215px;width:361px;height:50px;background:#4f81bd;border:1.5px solid #385f8f;border-radius:9px"></div>
<div class="t" style="top:232px;font-size:18px;color:#fff;left:208.70px;transform:scaleX(0.9712);transform-origin:0 0;">Güncelle</div>
<div class="a" style="left:429px;top:216px;width:122px;height:50px;background:#4f81bd;border:1.5px solid #385f8f;border-radius:9px"></div>
<div class="t" style="top:233px;font-size:18px;color:#fff;left:461.31px;transform:scaleX(0.9568);transform-origin:0 0;">PDF Aç</div>
<div class="a" style="left:557px;top:216px;width:116px;height:50px;background:#4f81bd;border:1.5px solid #385f8f;border-radius:9px"></div>
<div class="t" style="top:233px;font-size:18px;color:#fff;left:581.78px;">Form Aç</div>
<div class="t" style="top:214px;font-size:11px;color:#000;font-weight:bold;left:695.97px;transform:scaleX(0.9754);transform-origin:0 0;">V:\Hasta Dosyası\Rapor</div>
<div class="t" style="top:214px;font-size:11px;color:#000;font-weight:bold;left:827.60px;transform:scaleX(0.9189);transform-origin:0 0;">Y:\VEKALETNAME</div>
<svg class="a" style="left:819px;top:210px;" width="6" height="6" viewBox="0 0 6 6"><path d="M0 0H6V6Z" fill="#e00"/></svg>
<svg class="a" style="left:919px;top:210px;" width="6" height="6" viewBox="0 0 6 6"><path d="M0 0H6V6Z" fill="#e00"/></svg>
<div class="t" style="top:277px;font-size:11px;color:#000;font-weight:bold;left:25.62px;transform:scaleX(0.8672);transform-origin:0 0;">SPECODE3</div>
<div class="t" style="top:277px;font-size:11px;color:#000;font-weight:bold;left:85.99px;transform:scaleX(0.9389);transform-origin:0 0;">DOSYA_NO</div>
<div class="t" style="top:277px;font-size:11px;color:#000;font-weight:bold;left:150.99px;transform:scaleX(0.9364);transform-origin:0 0;">ADI_SOYADI</div>
<div class="t" style="top:277px;font-size:11px;color:#000;font-weight:bold;left:278.30px;transform:scaleX(0.9066);transform-origin:0 0;">RAPOR_ONIZLEME</div>
<div class="t" style="top:277px;font-size:11px;color:#000;font-weight:bold;left:382.91px;transform:scaleX(0.8940);transform-origin:0 0;">VEKALET_ONIZLEME</div>
<div class="t" style="top:277px;font-size:11px;color:#000;font-weight:bold;left:495.78px;transform:scaleX(0.9457);transform-origin:0 0;">SON_FATURA_TARIHI</div>
<div class="t" style="top:277px;font-size:11px;color:#000;font-weight:bold;left:662.50px;transform:scaleX(0.9111);transform-origin:0 0;">TCNO</div>
<div class="t" style="top:277px;font-size:11px;color:#000;font-weight:bold;left:696.00px;transform:scaleX(0.9197);transform-origin:0 0;">RAPOR_BITIS_TARIHI</div>
<div class="t" style="top:277px;font-size:11px;color:#000;font-weight:bold;left:827.80px;transform:scaleX(0.9043);transform-origin:0 0;">RAPOR_FARKI</div>
<div class="t" style="top:277px;font-size:11px;color:#000;font-weight:bold;left:927.59px;transform:scaleX(0.9415);transform-origin:0 0;">HASTANEADI</div>
<div class="t" style="top:277px;font-size:11px;color:#000;font-weight:bold;left:1154.40px;transform:scaleX(0.9201);transform-origin:0 0;">SERVIS_ADI</div>
<div class="t" style="top:277px;font-size:11px;color:#000;font-weight:bold;left:1243.58px;transform:scaleX(0.9479);transform-origin:0 0;">MMALZEME</div>
<div class="a" style="left:1311px;top:272px;width:28px;height:17px;overflow:hidden"><div class="a" style="left:-1311px;top:-272px"><div class="t" style="top:277px;font-size:11px;color:#000;font-weight:bold;left:1313.54px;transform:scaleX(1.0541);transform-origin:0 0;">TAKIP</div></div></div>
<div class="t" style="top:294px;font-size:11px;color:#000;left:26.31px;transform:scaleX(0.8907);transform-origin:0 0;">U</div>
<div class="t" style="top:294px;font-size:11px;color:#000;left:139.87px;transform:scaleX(1.1249);transform-origin:100% 0;">3</div>
<div class="t" style="top:294px;font-size:11px;color:#000;left:150.97px;transform:scaleX(0.9668);transform-origin:0 0;">AHMET BALMUMCU</div>
<div class="a" style="left:275px;top:289px;width:105px;height:17px;overflow:hidden"><div class="a" style="left:-275px;top:-289px"><div class="t" style="top:294px;font-size:11px;color:#2323b8;left:277.81px;transform:scaleX(1.1070);transform-origin:0 0;">V:\Hasta Dosyası\Rapor</div></div></div>
<div class="a" style="left:278px;top:304px;width:102px;height:1px;background:#2323b8;"></div>
<div class="a" style="left:380px;top:289px;width:113px;height:17px;overflow:hidden"><div class="a" style="left:-380px;top:-289px"><div class="t" style="top:294px;font-size:11px;color:#2323b8;left:383.07px;transform:scaleX(0.9750);transform-origin:0 0;">Y:\VEKALETNAME\3.pdf</div></div></div>
<div class="a" style="left:383px;top:304px;width:110px;height:1px;background:#2323b8;"></div>
<div class="t" style="top:294px;font-size:11px;color:#000;left:556.96px;transform:scaleX(0.9892);transform-origin:0 0;">26.06.2014</div>
<div class="t" style="top:294px;font-size:11px;color:#000;left:768.97px;transform:scaleX(0.9819);transform-origin:0 0;">26.06.2014</div>
<div class="t" style="top:294px;font-size:11px;color:#000;left:901.41px;">-213</div>
<div class="t" style="top:294px;font-size:11px;color:#000;left:927.58px;transform:scaleX(0.9532);transform-origin:0 0;">BALIKLI RUM HASTANESİ</div>
<div class="t" style="top:294px;font-size:11px;color:#000;left:1154.40px;transform:scaleX(0.9055);transform-origin:0 0;">GENEL CERRAHİ</div>
<div class="a" style="left:1311px;top:289px;width:28px;height:17px;overflow:hidden"><div class="a" style="left:-1311px;top:-289px"><div class="t" style="top:294px;font-size:11px;color:#000;left:1314.06px;">Vekalet</div></div></div>
<div class="a" style="left:668px;top:301px;width:24px;height:2px;background:repeating-linear-gradient(90deg,#222 0 1.4px,#888 1.4px 2px)"></div>
<div class="t" style="top:311px;font-size:11px;color:#000;left:26.31px;transform:scaleX(0.8907);transform-origin:0 0;">U</div>
<div class="t" style="top:311px;font-size:11px;color:#000;left:139.87px;transform:scaleX(1.1249);transform-origin:100% 0;">3</div>
<div class="t" style="top:311px;font-size:11px;color:#000;left:150.97px;transform:scaleX(0.9668);transform-origin:0 0;">AHMET BALMUMCU</div>
<div class="a" style="left:275px;top:306px;width:105px;height:17px;overflow:hidden"><div class="a" style="left:-275px;top:-306px"><div class="t" style="top:311px;font-size:11px;color:#2323b8;left:277.81px;transform:scaleX(1.1070);transform-origin:0 0;">V:\Hasta Dosyası\Rapor</div></div></div>
<div class="a" style="left:278px;top:321px;width:102px;height:1px;background:#2323b8;"></div>
<div class="a" style="left:380px;top:306px;width:113px;height:17px;overflow:hidden"><div class="a" style="left:-380px;top:-306px"><div class="t" style="top:311px;font-size:11px;color:#2323b8;left:383.07px;transform:scaleX(0.9750);transform-origin:0 0;">Y:\VEKALETNAME\3.pdf</div></div></div>
<div class="a" style="left:383px;top:321px;width:110px;height:1px;background:#2323b8;"></div>
<div class="t" style="top:311px;font-size:11px;color:#000;left:556.96px;transform:scaleX(0.9892);transform-origin:0 0;">26.06.2014</div>
<div class="t" style="top:311px;font-size:11px;color:#000;left:768.97px;transform:scaleX(0.9819);transform-origin:0 0;">26.06.2014</div>
<div class="t" style="top:311px;font-size:11px;color:#000;left:901.41px;">-161</div>
<div class="t" style="top:311px;font-size:11px;color:#000;left:927.58px;transform:scaleX(0.9532);transform-origin:0 0;">BALIKLI RUM HASTANESİ</div>
<div class="t" style="top:311px;font-size:11px;color:#000;left:1154.40px;transform:scaleX(0.9055);transform-origin:0 0;">GENEL CERRAHİ</div>
<div class="a" style="left:1311px;top:306px;width:28px;height:17px;overflow:hidden"><div class="a" style="left:-1311px;top:-306px"><div class="t" style="top:311px;font-size:11px;color:#000;left:1314.06px;">Vekalet</div></div></div>
<div class="a" style="left:668px;top:318px;width:24px;height:2px;background:repeating-linear-gradient(90deg,#222 0 1.4px,#888 1.4px 2px)"></div>
<div class="t" style="top:328px;font-size:11px;color:#000;left:26.31px;transform:scaleX(0.8907);transform-origin:0 0;">U</div>
<div class="t" style="top:328px;font-size:11px;color:#000;left:139.87px;transform:scaleX(1.1249);transform-origin:100% 0;">3</div>
<div class="t" style="top:328px;font-size:11px;color:#000;left:150.97px;transform:scaleX(0.9668);transform-origin:0 0;">AHMET BALMUMCU</div>
<div class="a" style="left:275px;top:323px;width:105px;height:17px;overflow:hidden"><div class="a" style="left:-275px;top:-323px"><div class="t" style="top:328px;font-size:11px;color:#2323b8;left:277.81px;transform:scaleX(1.1070);transform-origin:0 0;">V:\Hasta Dosyası\Rapor</div></div></div>
<div class="a" style="left:278px;top:338px;width:102px;height:1px;background:#2323b8;"></div>
<div class="a" style="left:380px;top:323px;width:113px;height:17px;overflow:hidden"><div class="a" style="left:-380px;top:-323px"><div class="t" style="top:328px;font-size:11px;color:#2323b8;left:383.07px;transform:scaleX(0.9750);transform-origin:0 0;">Y:\VEKALETNAME\3.pdf</div></div></div>
<div class="a" style="left:383px;top:338px;width:110px;height:1px;background:#2323b8;"></div>
<div class="t" style="top:328px;font-size:11px;color:#000;left:556.96px;transform:scaleX(0.9892);transform-origin:0 0;">26.06.2014</div>
<div class="t" style="top:328px;font-size:11px;color:#000;left:768.97px;transform:scaleX(0.9819);transform-origin:0 0;">26.06.2014</div>
<div class="t" style="top:328px;font-size:11px;color:#000;left:907.54px;transform:scaleX(1.0182);transform-origin:100% 0;">-55</div>
<div class="t" style="top:328px;font-size:11px;color:#000;left:927.58px;transform:scaleX(0.9532);transform-origin:0 0;">BALIKLI RUM HASTANESİ</div>
<div class="t" style="top:328px;font-size:11px;color:#000;left:1154.40px;transform:scaleX(0.9055);transform-origin:0 0;">GENEL CERRAHİ</div>
<div class="a" style="left:1311px;top:323px;width:28px;height:17px;overflow:hidden"><div class="a" style="left:-1311px;top:-323px"><div class="t" style="top:328px;font-size:11px;color:#000;left:1314.06px;">Vekalet</div></div></div>
<div class="a" style="left:668px;top:335px;width:24px;height:2px;background:repeating-linear-gradient(90deg,#222 0 1.4px,#888 1.4px 2px)"></div>
<div class="t" style="top:345px;font-size:11px;color:#000;left:26.32px;transform:scaleX(0.8664);transform-origin:0 0;">S</div>
<div class="t" style="top:345px;font-size:11px;color:#000;left:139.87px;transform:scaleX(1.1249);transform-origin:100% 0;">3</div>
<div class="t" style="top:345px;font-size:11px;color:#000;left:150.97px;transform:scaleX(0.9668);transform-origin:0 0;">AHMET BALMUMCU</div>
<div class="t" style="top:345px;font-size:11px;color:#2323b8;left:277.81px;transform:scaleX(1.1070);transform-origin:0 0;">c:\drivers\3S.pdf</div>
<div class="a" style="left:278px;top:355px;width:89px;height:1px;background:#2323b8;"></div>
<div class="a" style="left:380px;top:340px;width:113px;height:17px;overflow:hidden"><div class="a" style="left:-380px;top:-340px"><div class="t" style="top:345px;font-size:11px;color:#2323b8;left:383.07px;transform:scaleX(0.9750);transform-origin:0 0;">Y:\VEKALETNAME\3.pdf</div></div></div>
<div class="a" style="left:383px;top:355px;width:110px;height:1px;background:#2323b8;"></div>
<div class="t" style="top:345px;font-size:11px;color:#000;left:556.96px;transform:scaleX(0.9892);transform-origin:0 0;">26.06.2014</div>
<div class="t" style="top:345px;font-size:11px;color:#000;left:768.97px;transform:scaleX(0.9819);transform-origin:0 0;">26.06.2014</div>
<div class="t" style="top:345px;font-size:11px;color:#000;left:901.41px;">-213</div>
<div class="t" style="top:345px;font-size:11px;color:#000;left:927.58px;transform:scaleX(0.9532);transform-origin:0 0;">BALIKLI RUM HASTANESİ</div>
<div class="t" style="top:345px;font-size:11px;color:#000;left:1154.40px;transform:scaleX(0.9055);transform-origin:0 0;">GENEL CERRAHİ</div>
<div class="a" style="left:1311px;top:340px;width:28px;height:17px;overflow:hidden"><div class="a" style="left:-1311px;top:-340px"><div class="t" style="top:345px;font-size:11px;color:#000;left:1314.06px;">Vekalet</div></div></div>
<div class="a" style="left:668px;top:352px;width:24px;height:2px;background:repeating-linear-gradient(90deg,#222 0 1.4px,#888 1.4px 2px)"></div>
<div class="t" style="top:362px;font-size:11px;color:#000;left:26.32px;transform:scaleX(0.8664);transform-origin:0 0;">S</div>
<div class="t" style="top:362px;font-size:11px;color:#000;left:139.87px;transform:scaleX(1.1249);transform-origin:100% 0;">3</div>
<div class="t" style="top:362px;font-size:11px;color:#000;left:150.97px;transform:scaleX(0.9668);transform-origin:0 0;">AHMET BALMUMCU</div>
<div class="t" style="top:362px;font-size:11px;color:#2323b8;left:277.81px;transform:scaleX(1.1070);transform-origin:0 0;">c:\drivers\3S.pdf</div>
<div class="a" style="left:278px;top:372px;width:89px;height:1px;background:#2323b8;"></div>
<div class="a" style="left:380px;top:357px;width:113px;height:17px;overflow:hidden"><div class="a" style="left:-380px;top:-357px"><div class="t" style="top:362px;font-size:11px;color:#2323b8;left:383.07px;transform:scaleX(0.9750);transform-origin:0 0;">Y:\VEKALETNAME\3.pdf</div></div></div>
<div class="a" style="left:383px;top:372px;width:110px;height:1px;background:#2323b8;"></div>
<div class="t" style="top:362px;font-size:11px;color:#000;left:556.96px;transform:scaleX(0.9892);transform-origin:0 0;">26.06.2014</div>
<div class="t" style="top:362px;font-size:11px;color:#000;left:768.97px;transform:scaleX(0.9819);transform-origin:0 0;">26.06.2014</div>
<div class="t" style="top:362px;font-size:11px;color:#000;left:901.41px;">-161</div>
<div class="t" style="top:362px;font-size:11px;color:#000;left:927.58px;transform:scaleX(0.9532);transform-origin:0 0;">BALIKLI RUM HASTANESİ</div>
<div class="t" style="top:362px;font-size:11px;color:#000;left:1154.40px;transform:scaleX(0.9055);transform-origin:0 0;">GENEL CERRAHİ</div>
<div class="a" style="left:1311px;top:357px;width:28px;height:17px;overflow:hidden"><div class="a" style="left:-1311px;top:-357px"><div class="t" style="top:362px;font-size:11px;color:#000;left:1314.06px;">Vekalet</div></div></div>
<div class="a" style="left:668px;top:369px;width:24px;height:2px;background:repeating-linear-gradient(90deg,#222 0 1.4px,#888 1.4px 2px)"></div>
<div class="t" style="top:379px;font-size:11px;color:#000;left:26.32px;transform:scaleX(0.8664);transform-origin:0 0;">S</div>
<div class="t" style="top:379px;font-size:11px;color:#000;left:139.87px;transform:scaleX(1.1249);transform-origin:100% 0;">3</div>
<div class="t" style="top:379px;font-size:11px;color:#000;left:150.97px;transform:scaleX(0.9668);transform-origin:0 0;">AHMET BALMUMCU</div>
<div class="a" style="left:275px;top:374px;width:105px;height:17px;overflow:hidden"><div class="a" style="left:-275px;top:-374px"><div class="t" style="top:379px;font-size:11px;color:#2323b8;left:277.81px;transform:scaleX(1.1070);transform-origin:0 0;">V:\Hasta Dosyası\Rapor</div></div></div>
<div class="a" style="left:278px;top:389px;width:102px;height:1px;background:#2323b8;"></div>
<div class="a" style="left:380px;top:374px;width:113px;height:17px;overflow:hidden"><div class="a" style="left:-380px;top:-374px"><div class="t" style="top:379px;font-size:11px;color:#2323b8;left:383.07px;transform:scaleX(0.9750);transform-origin:0 0;">Y:\VEKALETNAME\3.pdf</div></div></div>
<div class="a" style="left:383px;top:389px;width:110px;height:1px;background:#2323b8;"></div>
<div class="t" style="top:379px;font-size:11px;color:#000;left:556.96px;transform:scaleX(0.9892);transform-origin:0 0;">26.06.2014</div>
<div class="t" style="top:379px;font-size:11px;color:#000;left:768.97px;transform:scaleX(0.9819);transform-origin:0 0;">26.06.2014</div>
<div class="t" style="top:379px;font-size:11px;color:#000;left:907.54px;transform:scaleX(1.0182);transform-origin:100% 0;">-55</div>
<div class="t" style="top:379px;font-size:11px;color:#000;left:927.58px;transform:scaleX(0.9532);transform-origin:0 0;">BALIKLI RUM HASTANESİ</div>
<div class="t" style="top:379px;font-size:11px;color:#000;left:1154.40px;transform:scaleX(0.9055);transform-origin:0 0;">GENEL CERRAHİ</div>
<div class="a" style="left:1311px;top:374px;width:28px;height:17px;overflow:hidden"><div class="a" style="left:-1311px;top:-374px"><div class="t" style="top:379px;font-size:11px;color:#000;left:1314.06px;">Vekalet</div></div></div>
<div class="a" style="left:668px;top:386px;width:24px;height:2px;background:repeating-linear-gradient(90deg,#222 0 1.4px,#888 1.4px 2px)"></div>
<div class="t" style="top:396px;font-size:11px;color:#000;left:26.31px;transform:scaleX(0.8973);transform-origin:0 0;">B</div>
<div class="t" style="top:396px;font-size:11px;color:#000;left:139.87px;transform:scaleX(1.1249);transform-origin:100% 0;">3</div>
<div class="t" style="top:396px;font-size:11px;color:#000;left:150.97px;transform:scaleX(0.9668);transform-origin:0 0;">AHMET BALMUMCU</div>
<div class="a" style="left:275px;top:391px;width:105px;height:17px;overflow:hidden"><div class="a" style="left:-275px;top:-391px"><div class="t" style="top:396px;font-size:11px;color:#2323b8;left:277.81px;transform:scaleX(1.1070);transform-origin:0 0;">V:\Hasta Dosyası\Rapor</div></div></div>
<div class="a" style="left:278px;top:406px;width:102px;height:1px;background:#2323b8;"></div>
<div class="a" style="left:380px;top:391px;width:113px;height:17px;overflow:hidden"><div class="a" style="left:-380px;top:-391px"><div class="t" style="top:396px;font-size:11px;color:#2323b8;left:383.07px;transform:scaleX(0.9750);transform-origin:0 0;">Y:\VEKALETNAME\3.pdf</div></div></div>
<div class="a" style="left:383px;top:406px;width:110px;height:1px;background:#2323b8;"></div>
<div class="t" style="top:396px;font-size:11px;color:#000;left:556.96px;transform:scaleX(0.9892);transform-origin:0 0;">26.06.2014</div>
<div class="t" style="top:396px;font-size:11px;color:#000;left:768.97px;transform:scaleX(0.9819);transform-origin:0 0;">26.06.2014</div>
<div class="t" style="top:396px;font-size:11px;color:#000;left:901.41px;">-213</div>
<div class="t" style="top:396px;font-size:11px;color:#000;left:927.58px;transform:scaleX(0.9532);transform-origin:0 0;">BALIKLI RUM HASTANESİ</div>
<div class="t" style="top:396px;font-size:11px;color:#000;left:1154.40px;transform:scaleX(0.9055);transform-origin:0 0;">GENEL CERRAHİ</div>
<div class="a" style="left:1311px;top:391px;width:28px;height:17px;overflow:hidden"><div class="a" style="left:-1311px;top:-391px"><div class="t" style="top:396px;font-size:11px;color:#000;left:1314.06px;">Vekalet</div></div></div>
<div class="a" style="left:668px;top:403px;width:24px;height:2px;background:repeating-linear-gradient(90deg,#222 0 1.4px,#888 1.4px 2px)"></div>
<div class="t" style="top:413px;font-size:11px;color:#000;left:26.31px;transform:scaleX(0.8973);transform-origin:0 0;">B</div>
<div class="t" style="top:413px;font-size:11px;color:#000;left:139.87px;transform:scaleX(1.1249);transform-origin:100% 0;">3</div>
<div class="t" style="top:413px;font-size:11px;color:#000;left:150.97px;transform:scaleX(0.9668);transform-origin:0 0;">AHMET BALMUMCU</div>
<div class="a" style="left:275px;top:408px;width:105px;height:17px;overflow:hidden"><div class="a" style="left:-275px;top:-408px"><div class="t" style="top:413px;font-size:11px;color:#2323b8;left:277.81px;transform:scaleX(1.1070);transform-origin:0 0;">V:\Hasta Dosyası\Rapor</div></div></div>
<div class="a" style="left:278px;top:423px;width:102px;height:1px;background:#2323b8;"></div>
<div class="a" style="left:380px;top:408px;width:113px;height:17px;overflow:hidden"><div class="a" style="left:-380px;top:-408px"><div class="t" style="top:413px;font-size:11px;color:#2323b8;left:383.07px;transform:scaleX(0.9750);transform-origin:0 0;">Y:\VEKALETNAME\3.pdf</div></div></div>
<div class="a" style="left:383px;top:423px;width:110px;height:1px;background:#2323b8;"></div>
<div class="t" style="top:413px;font-size:11px;color:#000;left:556.96px;transform:scaleX(0.9892);transform-origin:0 0;">26.06.2014</div>
<div class="t" style="top:413px;font-size:11px;color:#000;left:768.97px;transform:scaleX(0.9819);transform-origin:0 0;">26.06.2014</div>
<div class="t" style="top:413px;font-size:11px;color:#000;left:901.41px;">-161</div>
<div class="t" style="top:413px;font-size:11px;color:#000;left:927.58px;transform:scaleX(0.9532);transform-origin:0 0;">BALIKLI RUM HASTANESİ</div>
<div class="t" style="top:413px;font-size:11px;color:#000;left:1154.40px;transform:scaleX(0.9055);transform-origin:0 0;">GENEL CERRAHİ</div>
<div class="a" style="left:1311px;top:408px;width:28px;height:17px;overflow:hidden"><div class="a" style="left:-1311px;top:-408px"><div class="t" style="top:413px;font-size:11px;color:#000;left:1314.06px;">Vekalet</div></div></div>
<div class="a" style="left:668px;top:420px;width:24px;height:2px;background:repeating-linear-gradient(90deg,#222 0 1.4px,#888 1.4px 2px)"></div>
<div class="t" style="top:430px;font-size:11px;color:#000;left:26.31px;transform:scaleX(0.8973);transform-origin:0 0;">B</div>
<div class="t" style="top:430px;font-size:11px;color:#000;left:139.87px;transform:scaleX(1.1249);transform-origin:100% 0;">3</div>
<div class="t" style="top:430px;font-size:11px;color:#000;left:150.97px;transform:scaleX(0.9668);transform-origin:0 0;">AHMET BALMUMCU</div>
<div class="a" style="left:275px;top:425px;width:105px;height:17px;overflow:hidden"><div class="a" style="left:-275px;top:-425px"><div class="t" style="top:430px;font-size:11px;color:#2323b8;left:277.81px;transform:scaleX(1.1070);transform-origin:0 0;">V:\Hasta Dosyası\Rapor</div></div></div>
<div class="a" style="left:278px;top:440px;width:102px;height:1px;background:#2323b8;"></div>
<div class="a" style="left:380px;top:425px;width:113px;height:17px;overflow:hidden"><div class="a" style="left:-380px;top:-425px"><div class="t" style="top:430px;font-size:11px;color:#2323b8;left:383.07px;transform:scaleX(0.9750);transform-origin:0 0;">Y:\VEKALETNAME\3.pdf</div></div></div>
<div class="a" style="left:383px;top:440px;width:110px;height:1px;background:#2323b8;"></div>
<div class="t" style="top:430px;font-size:11px;color:#000;left:556.96px;transform:scaleX(0.9892);transform-origin:0 0;">26.06.2014</div>
<div class="t" style="top:430px;font-size:11px;color:#000;left:768.97px;transform:scaleX(0.9819);transform-origin:0 0;">26.06.2014</div>
<div class="t" style="top:430px;font-size:11px;color:#000;left:907.54px;transform:scaleX(1.0182);transform-origin:100% 0;">-55</div>
<div class="t" style="top:430px;font-size:11px;color:#000;left:927.58px;transform:scaleX(0.9532);transform-origin:0 0;">BALIKLI RUM HASTANESİ</div>
<div class="t" style="top:430px;font-size:11px;color:#000;left:1154.40px;transform:scaleX(0.9055);transform-origin:0 0;">GENEL CERRAHİ</div>
<div class="a" style="left:1311px;top:425px;width:28px;height:17px;overflow:hidden"><div class="a" style="left:-1311px;top:-425px"><div class="t" style="top:430px;font-size:11px;color:#000;left:1314.06px;">Vekalet</div></div></div>
<div class="a" style="left:668px;top:437px;width:24px;height:2px;background:repeating-linear-gradient(90deg,#222 0 1.4px,#888 1.4px 2px)"></div>
<div class="t" style="top:447px;font-size:11px;color:#000;left:26.32px;transform:scaleX(0.8664);transform-origin:0 0;">S</div>
<div class="t" style="top:447px;font-size:11px;color:#000;left:121.46px;">2130</div>
<div class="t" style="top:447px;font-size:11px;color:#000;left:151.00px;transform:scaleX(0.9143);transform-origin:0 0;">EBRU BERKAY</div>
<div class="a" style="left:275px;top:442px;width:105px;height:17px;overflow:hidden"><div class="a" style="left:-275px;top:-442px"><div class="t" style="top:447px;font-size:11px;color:#2323b8;left:277.81px;transform:scaleX(1.1070);transform-origin:0 0;">V:\Hasta Dosyası\Rapor</div></div></div>
<div class="a" style="left:278px;top:457px;width:102px;height:1px;background:#2323b8;"></div>
<div class="a" style="left:380px;top:442px;width:113px;height:17px;overflow:hidden"><div class="a" style="left:-380px;top:-442px"><div class="t" style="top:447px;font-size:11px;color:#2323b8;left:383.07px;transform:scaleX(0.9750);transform-origin:0 0;">Y:\VEKALETNAME\2130.pdf</div></div></div>
<div class="a" style="left:383px;top:457px;width:110px;height:1px;background:#2323b8;"></div>
<div class="t" style="top:447px;font-size:11px;color:#000;left:556.96px;transform:scaleX(0.9892);transform-origin:0 0;">26.06.2014</div>
<div class="t" style="top:447px;font-size:11px;color:#000;left:768.97px;transform:scaleX(0.9819);transform-origin:0 0;">26.06.2014</div>
<div class="t" style="top:447px;font-size:11px;color:#000;left:901.41px;">-410</div>
<div class="t" style="top:447px;font-size:11px;color:#000;left:927.59px;transform:scaleX(0.9306);transform-origin:0 0;">ÇAPA TIP FAKÜLTESİ</div>
<div class="t" style="top:447px;font-size:11px;color:#000;left:1154.40px;transform:scaleX(0.9160);transform-origin:0 0;">B SERVİSİ</div>
<div class="a" style="left:1311px;top:442px;width:28px;height:17px;overflow:hidden"><div class="a" style="left:-1311px;top:-442px"><div class="t" style="top:447px;font-size:11px;color:#000;left:1314.06px;">Vekalet</div></div></div>
<div class="t" style="top:464px;font-size:11px;color:#000;left:26.32px;transform:scaleX(0.8664);transform-origin:0 0;">S</div>
<div class="t" style="top:464px;font-size:11px;color:#000;left:121.46px;">2130</div>
<div class="t" style="top:464px;font-size:11px;color:#000;left:151.00px;transform:scaleX(0.9143);transform-origin:0 0;">EBRU BERKAY</div>
<div class="a" style="left:275px;top:459px;width:105px;height:17px;overflow:hidden"><div class="a" style="left:-275px;top:-459px"><div class="t" style="top:464px;font-size:11px;color:#2323b8;left:277.81px;transform:scaleX(1.1070);transform-origin:0 0;">V:\Hasta Dosyası\Rapor</div></div></div>
<div class="a" style="left:278px;top:474px;width:102px;height:1px;background:#2323b8;"></div>
<div class="a" style="left:380px;top:459px;width:113px;height:17px;overflow:hidden"><div class="a" style="left:-380px;top:-459px"><div class="t" style="top:464px;font-size:11px;color:#2323b8;left:383.07px;transform:scaleX(0.9750);transform-origin:0 0;">Y:\VEKALETNAME\2130.pdf</div></div></div>
<div class="a" style="left:383px;top:474px;width:110px;height:1px;background:#2323b8;"></div>
<div class="t" style="top:464px;font-size:11px;color:#000;left:556.96px;transform:scaleX(0.9892);transform-origin:0 0;">26.06.2014</div>
<div class="t" style="top:464px;font-size:11px;color:#000;left:768.97px;transform:scaleX(0.9819);transform-origin:0 0;">26.06.2014</div>
<div class="t" style="top:464px;font-size:11px;color:#000;left:901.41px;">-402</div>
<div class="t" style="top:464px;font-size:11px;color:#000;left:927.59px;transform:scaleX(0.9306);transform-origin:0 0;">ÇAPA TIP FAKÜLTESİ</div>
<div class="t" style="top:464px;font-size:11px;color:#000;left:1154.40px;transform:scaleX(0.9160);transform-origin:0 0;">B SERVİSİ</div>
<div class="a" style="left:1311px;top:459px;width:28px;height:17px;overflow:hidden"><div class="a" style="left:-1311px;top:-459px"><div class="t" style="top:464px;font-size:11px;color:#000;left:1314.06px;">Vekalet</div></div></div>
<div class="t" style="top:481px;font-size:11px;color:#000;left:26.31px;transform:scaleX(0.8973);transform-origin:0 0;">B</div>
<div class="t" style="top:481px;font-size:11px;color:#000;left:121.46px;">2130</div>
<div class="t" style="top:481px;font-size:11px;color:#000;left:151.00px;transform:scaleX(0.9143);transform-origin:0 0;">EBRU BERKAY</div>
<div class="a" style="left:275px;top:476px;width:105px;height:17px;overflow:hidden"><div class="a" style="left:-275px;top:-476px"><div class="t" style="top:481px;font-size:11px;color:#2323b8;left:277.81px;transform:scaleX(1.1070);transform-origin:0 0;">V:\Hasta Dosyası\Rapor</div></div></div>
<div class="a" style="left:278px;top:491px;width:102px;height:1px;background:#2323b8;"></div>
<div class="a" style="left:380px;top:476px;width:113px;height:17px;overflow:hidden"><div class="a" style="left:-380px;top:-476px"><div class="t" style="top:481px;font-size:11px;color:#2323b8;left:383.07px;transform:scaleX(0.9750);transform-origin:0 0;">Y:\VEKALETNAME\2130.pdf</div></div></div>
<div class="a" style="left:383px;top:491px;width:110px;height:1px;background:#2323b8;"></div>
<div class="t" style="top:481px;font-size:11px;color:#000;left:556.96px;transform:scaleX(0.9892);transform-origin:0 0;">26.06.2014</div>
<div class="t" style="top:481px;font-size:11px;color:#000;left:768.97px;transform:scaleX(0.9819);transform-origin:0 0;">26.06.2014</div>
<div class="t" style="top:481px;font-size:11px;color:#000;left:901.41px;">-410</div>
<div class="t" style="top:481px;font-size:11px;color:#000;left:927.59px;transform:scaleX(0.9306);transform-origin:0 0;">ÇAPA TIP FAKÜLTESİ</div>
<div class="t" style="top:481px;font-size:11px;color:#000;left:1154.40px;transform:scaleX(0.9160);transform-origin:0 0;">B SERVİSİ</div>
<div class="a" style="left:1311px;top:476px;width:28px;height:17px;overflow:hidden"><div class="a" style="left:-1311px;top:-476px"><div class="t" style="top:481px;font-size:11px;color:#000;left:1314.06px;">Vekalet</div></div></div>
<div class="t" style="top:498px;font-size:11px;color:#000;left:26.31px;transform:scaleX(0.8973);transform-origin:0 0;">B</div>
<div class="t" style="top:498px;font-size:11px;color:#000;left:121.46px;">2130</div>
<div class="t" style="top:498px;font-size:11px;color:#000;left:151.00px;transform:scaleX(0.9143);transform-origin:0 0;">EBRU BERKAY</div>
<div class="a" style="left:275px;top:493px;width:105px;height:17px;overflow:hidden"><div class="a" style="left:-275px;top:-493px"><div class="t" style="top:498px;font-size:11px;color:#2323b8;left:277.81px;transform:scaleX(1.1070);transform-origin:0 0;">V:\Hasta Dosyası\Rapor</div></div></div>
<div class="a" style="left:278px;top:508px;width:102px;height:1px;background:#2323b8;"></div>
<div class="a" style="left:380px;top:493px;width:113px;height:17px;overflow:hidden"><div class="a" style="left:-380px;top:-493px"><div class="t" style="top:498px;font-size:11px;color:#2323b8;left:383.07px;transform:scaleX(0.9750);transform-origin:0 0;">Y:\VEKALETNAME\2130.pdf</div></div></div>
<div class="a" style="left:383px;top:508px;width:110px;height:1px;background:#2323b8;"></div>
<div class="t" style="top:498px;font-size:11px;color:#000;left:556.96px;transform:scaleX(0.9892);transform-origin:0 0;">26.06.2014</div>
<div class="t" style="top:498px;font-size:11px;color:#000;left:768.97px;transform:scaleX(0.9819);transform-origin:0 0;">26.06.2014</div>
<div class="t" style="top:498px;font-size:11px;color:#000;left:901.41px;">-402</div>
<div class="t" style="top:498px;font-size:11px;color:#000;left:927.59px;transform:scaleX(0.9306);transform-origin:0 0;">ÇAPA TIP FAKÜLTESİ</div>
<div class="t" style="top:498px;font-size:11px;color:#000;left:1154.40px;transform:scaleX(0.9160);transform-origin:0 0;">B SERVİSİ</div>
<div class="a" style="left:1311px;top:493px;width:28px;height:17px;overflow:hidden"><div class="a" style="left:-1311px;top:-493px"><div class="t" style="top:498px;font-size:11px;color:#000;left:1314.06px;">Vekalet</div></div></div>
<div class="t" style="top:515px;font-size:11px;color:#000;left:26.32px;transform:scaleX(0.8664);transform-origin:0 0;">S</div>
<div class="t" style="top:515px;font-size:11px;color:#000;left:121.46px;">1766</div>
<div class="t" style="top:515px;font-size:11px;color:#000;left:150.97px;transform:scaleX(0.9766);transform-origin:0 0;">İBRAHİM ÖZCAN</div>
<div class="a" style="left:275px;top:510px;width:105px;height:17px;overflow:hidden"><div class="a" style="left:-275px;top:-510px"><div class="t" style="top:515px;font-size:11px;color:#2323b8;left:277.81px;transform:scaleX(1.1070);transform-origin:0 0;">V:\Hasta Dosyası\Rapor</div></div></div>
<div class="a" style="left:278px;top:525px;width:102px;height:1px;background:#2323b8;"></div>
<div class="a" style="left:380px;top:510px;width:113px;height:17px;overflow:hidden"><div class="a" style="left:-380px;top:-510px"><div class="t" style="top:515px;font-size:11px;color:#2323b8;left:383.07px;transform:scaleX(0.9750);transform-origin:0 0;">Y:\VEKALETNAME\1766.pdf</div></div></div>
<div class="a" style="left:383px;top:525px;width:110px;height:1px;background:#2323b8;"></div>
<div class="t" style="top:515px;font-size:11px;color:#000;left:556.96px;transform:scaleX(0.9892);transform-origin:0 0;">26.06.2014</div>
<div class="t" style="top:515px;font-size:11px;color:#000;left:768.97px;transform:scaleX(0.9819);transform-origin:0 0;">26.06.2014</div>
<div class="t" style="top:515px;font-size:11px;color:#000;left:901.41px;">-259</div>
<div class="t" style="top:515px;font-size:11px;color:#000;left:927.50px;transform:scaleX(1.1365);transform-origin:0 0;">İstanbul Fizik Tedavi ve Rehabilitasyon</div>
<div class="a" style="left:1311px;top:510px;width:28px;height:17px;overflow:hidden"><div class="a" style="left:-1311px;top:-510px"><div class="t" style="top:515px;font-size:11px;color:#000;left:1314.06px;">Vekalet</div></div></div>
<div class="a" style="left:670px;top:522px;width:22px;height:2px;background:repeating-linear-gradient(90deg,#333 0 1.2px,#aaa 1.2px 2px)"></div>
<div class="t" style="top:532px;font-size:11px;color:#000;left:26.33px;transform:scaleX(0.8483);transform-origin:0 0;">C</div>
<div class="t" style="top:532px;font-size:11px;color:#000;left:139.87px;transform:scaleX(1.1249);transform-origin:100% 0;">4</div>
<div class="t" style="top:532px;font-size:11px;color:#000;left:151.00px;transform:scaleX(0.9139);transform-origin:0 0;">KEMAL KARAÇAY</div>
<div class="a" style="left:275px;top:527px;width:105px;height:17px;overflow:hidden"><div class="a" style="left:-275px;top:-527px"><div class="t" style="top:532px;font-size:11px;color:#2323b8;left:277.81px;transform:scaleX(1.1070);transform-origin:0 0;">V:\Hasta Dosyası\Rapor</div></div></div>
<div class="a" style="left:278px;top:542px;width:102px;height:1px;background:#2323b8;"></div>
<div class="a" style="left:380px;top:527px;width:113px;height:17px;overflow:hidden"><div class="a" style="left:-380px;top:-527px"><div class="t" style="top:532px;font-size:11px;color:#2323b8;left:383.07px;transform:scaleX(0.9750);transform-origin:0 0;">Y:\VEKALETNAME\4.pdf</div></div></div>
<div class="a" style="left:383px;top:542px;width:110px;height:1px;background:#2323b8;"></div>
<div class="t" style="top:532px;font-size:11px;color:#000;left:556.96px;transform:scaleX(0.9892);transform-origin:0 0;">26.06.2014</div>
<div class="t" style="top:532px;font-size:11px;color:#000;left:768.97px;transform:scaleX(0.9819);transform-origin:0 0;">26.06.2014</div>
<div class="t" style="top:532px;font-size:11px;color:#000;left:901.41px;">-349</div>
<div class="t" style="top:532px;font-size:11px;color:#000;left:927.60px;transform:scaleX(0.9173);transform-origin:0 0;">CERRAHPAŞA TIP FAKÜLTESİ</div>
<div class="t" style="top:532px;font-size:11px;color:#000;left:1154.40px;transform:scaleX(0.9055);transform-origin:0 0;">GENEL CERRAHİ</div>
<div class="a" style="left:1311px;top:527px;width:28px;height:17px;overflow:hidden"><div class="a" style="left:-1311px;top:-527px"><div class="t" style="top:532px;font-size:11px;color:#000;left:1314.06px;">Vekalet</div></div></div>
<div class="a" style="left:670px;top:539px;width:22px;height:2px;background:repeating-linear-gradient(90deg,#333 0 1.2px,#aaa 1.2px 2px)"></div>
<div class="a" style="left:1341px;top:195px;width:18px;height:482px;background:#fff;"></div>
<div class="a" style="left:1343px;top:229px;width:15px;height:433px;background:#f0f0f0;"></div>
<div class="a" style="left:1343px;top:197px;width:15px;height:15px;background:#fff;border:1px solid #ababab;"></div>
<svg class="a" style="left:1347px;top:202px;" width="8" height="5" viewBox="0 0 8 5"><path d="M0 4.5H8L4 0.5Z" fill="#666"/></svg>
<div class="a" style="left:1343px;top:212px;width:15px;height:17px;background:#fff;border:1px solid #ababab;"></div>
<div class="a" style="left:1343px;top:662px;width:15px;height:15px;background:#fff;border:1px solid #ababab;"></div>
<svg class="a" style="left:1347px;top:667px;" width="8" height="5" viewBox="0 0 8 5"><path d="M0 0.5H8L4 4.5Z" fill="#666"/></svg>
<div class="a" style="left:1px;top:678px;width:1358px;height:27px;background:#f3f3f3;"></div>
<div class="a" style="left:23px;top:677px;width:1316px;height:1px;background:#9b9b9b;"></div>
<div class="a" style="left:1px;top:677px;width:22px;height:1px;background:#c8c8c8;"></div>
<svg class="a" style="left:28px;top:687px;" width="5" height="8" viewBox="0 0 5 8"><path d="M4.5 0V8L0.5 4Z" fill="#c3c3c3"/></svg>
<svg class="a" style="left:57px;top:687px;" width="5" height="8" viewBox="0 0 5 8"><path d="M0.5 0V8L4.5 4Z" fill="#c3c3c3"/></svg>
<div class="a" style="left:101px;top:684px;width:1px;height:18px;background:#c6c6c6;"></div>
<div class="a" style="left:181px;top:677px;width:102px;height:25px;background:#fff;border:1px solid #ababab;border-top:none;"></div>
<div class="a" style="left:181px;top:700px;width:102px;height:2px;background:#217346;"></div>
<div class="t" style="top:684px;font-size:13px;color:#217346;font-weight:bold;left:192.79px;transform:scaleX(0.9842);transform-origin:0 0;">Hasta Ekranı</div>
<div class="t" style="top:684px;font-size:13px;color:#444;left:114.69px;transform:scaleX(0.9781);transform-origin:0 0;">Anasayfa</div>
<div class="t" style="top:684px;font-size:13px;color:#444;left:295.80px;transform:scaleX(0.9691);transform-origin:0 0;">Dilekçe</div>
<div class="a" style="left:352px;top:684px;width:1px;height:18px;background:#c6c6c6;"></div>
<div class="t" style="top:684px;font-size:13px;color:#444;left:363.87px;transform:scaleX(1.0121);transform-origin:0 0;">Yazdır</div>
<div class="a" style="left:413px;top:684px;width:1px;height:18px;background:#c6c6c6;"></div>
<div class="t" style="top:684px;font-size:13px;color:#444;left:425.98px;">Parametre</div>
<div class="a" style="left:500px;top:684px;width:1px;height:18px;background:#c6c6c6;"></div>
<div class="t" style="top:684px;font-size:13px;color:#444;left:515.02px;transform:scaleX(0.9166);transform-origin:0 0;">ACIKLAMALAR</div>
<div class="a" style="left:613px;top:684px;width:1px;height:18px;background:#c6c6c6;"></div>
<svg class="a" style="left:646px;top:682px;" width="18" height="18" viewBox="0 0 18 18"><circle cx="9" cy="9" r="7.6" fill="none" stroke="#777" stroke-width="1.3"/><path d="M9 4.8V13.2M4.8 9H13.2" stroke="#777" stroke-width="2"/></svg>
<div class="a" style="left:817px;top:686px;width:2px;height:2px;background:#a0a0a0;"></div>
<div class="a" style="left:817px;top:691px;width:2px;height:2px;background:#a0a0a0;"></div>
<div class="a" style="left:817px;top:696px;width:2px;height:2px;background:#a0a0a0;"></div>
<div class="a" style="left:834px;top:684px;width:503px;height:15px;background:#e8e8e8;"></div>
<div class="a" style="left:834px;top:684px;width:16px;height:15px;background:#fff;border:1px solid #ababab;"></div>
<svg class="a" style="left:839px;top:688px;" width="5" height="8" viewBox="0 0 5 8"><path d="M4.5 0V8L0.5 4Z" fill="#666"/></svg>
<div class="a" style="left:849px;top:684px;width:279px;height:15px;background:#fff;border:1px solid #ababab;"></div>
<div class="a" style="left:1322px;top:684px;width:15px;height:15px;background:#fff;border:1px solid #ababab;"></div>
<svg class="a" style="left:1327px;top:688px;" width="5" height="8" viewBox="0 0 5 8"><path d="M0.5 0V8L4.5 4Z" fill="#666"/></svg>
<div class="a" style="left:0px;top:705px;width:1359px;height:21px;background:#217346;"></div>
<div class="t" style="top:711px;font-size:10.5px;color:#fff;left:8.59px;transform:scaleX(0.9785);transform-origin:0 0;">HAZIR</div>
<svg class="a" style="left:75px;top:709px;" width="14" height="14" viewBox="0 0 14 14"><circle cx="3.5" cy="3.5" r="3" fill="#fff"/><rect x="2.5" y="3.5" width="11" height="10" fill="none" stroke="#fff"/><rect x="7" y="0.5" width="6" height="2.5" fill="#fff"/><path d="M4 6.5h2M7 6.5h2M10 6.5h2M4 9h2M7 9h2M10 9h2M4 11.5h2M7 11.5h2M10 11.5h2" stroke="#fff" stroke-width="1.4"/></svg>
<div class="a" style="left:1064px;top:705px;width:38px;height:21px;background:#1b5e39;"></div>
<svg class="a" style="left:1075px;top:709px;" width="14" height="13" viewBox="0 0 14 13"><path d="M0.5 0.5H13.5V12.5H0.5ZM4.8 0.5V12.5M9.2 0.5V12.5M0.5 4.5H13.5M0.5 8.5H13.5" fill="none" stroke="#fff"/></svg>
<svg class="a" style="left:1114px;top:709px;" width="14" height="13" viewBox="0 0 14 13"><rect x="0.5" y="0.5" width="13" height="12" fill="none" stroke="#fff"/><rect x="2.5" y="2.5" width="9" height="8" fill="none" stroke="#fff"/><path d="M4 4.5h6M4 6.5h6M4 8.5h6" stroke="#fff"/></svg>
<svg class="a" style="left:1152px;top:709px;" width="14" height="13" viewBox="0 0 14 13"><path d="M0.5 0.5H13.5V12.5H0.5Z" fill="none" stroke="#fff"/><rect x="2" y="1" width="4" height="7" fill="#fff"/><rect x="7" y="1" width="3" height="7" fill="#fff"/><path d="M0.5 8.5H13" stroke="#fff"/></svg>
<div class="a" style="left:1183px;top:715px;width:6px;height:2px;background:#fff;"></div>
<div class="a" style="left:1193px;top:715px;width:100px;height:1px;background:#fff;"></div>
<div class="a" style="left:1233px;top:709px;width:4px;height:13px;background:#fff;"></div>
<div class="a" style="left:1243px;top:712px;width:1px;height:6px;background:#fff;"></div>
<svg class="a" style="left:1297px;top:711px;" width="9" height="9" viewBox="0 0 9 9"><path d="M4.5 0V9M0 4.5H9" stroke="#fff" stroke-width="2"/></svg>
<div class="t" style="top:710px;font-size:11.5px;color:#fff;left:1319.16px;transform:scaleX(0.9497);transform-origin:0 0;">%85</div>
</body></html>
